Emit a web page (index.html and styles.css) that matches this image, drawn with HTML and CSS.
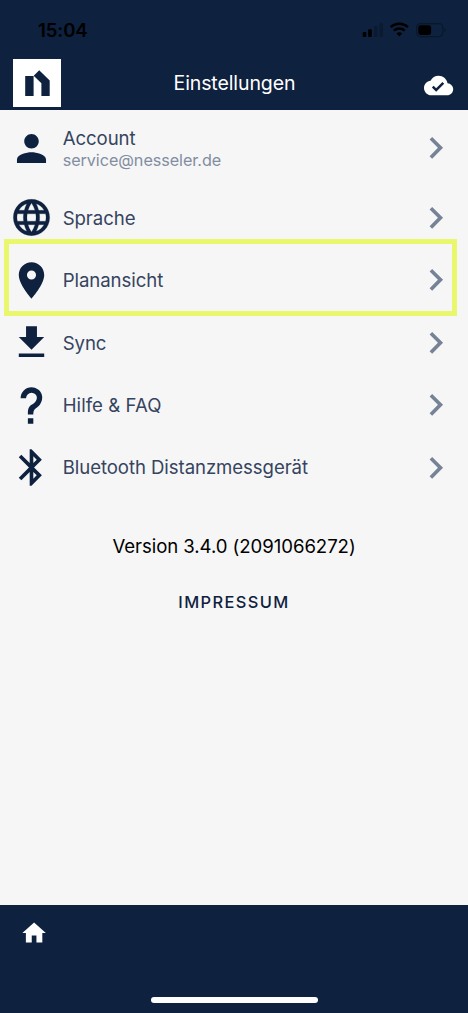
FILE: index.html
```html
<!DOCTYPE html>
<html lang="de">
<head>
<meta charset="utf-8">
<title>Einstellungen</title>
<link rel="stylesheet" href="styles.css">
</head>
<body>
<div class="app">
  <header class="header">
    <div class="status">
      <span class="time">15:04</span>
      <svg class="status-icons" width="86" height="18" viewBox="0 0 86 18">
        <rect x="0.7" y="11" width="3.6" height="5" rx="1"/>
        <rect x="6.2" y="8.3" width="3.6" height="7.7" rx="1"/>
        <rect class="dim" x="12" y="5" width="3.4" height="11" rx="1"/>
        <rect class="dim" x="17.6" y="2.2" width="3.4" height="13.8" rx="1"/>
        <g fill="none" stroke="#000" stroke-width="2.5">
          <path d="M28.7 6.2a12.5 12.5 0 0 1 17.2 0"/>
          <path d="M31.9 9.6a7.9 7.9 0 0 1 10.8 0"/>
        </g>
        <path d="M37.3 15.4l-2.8-2.9a4 4 0 0 1 5.6 0z"/>
        <rect class="shell" x="54.6" y="2.6" width="26.2" height="13" rx="4"/>
        <rect x="56.3" y="4.2" width="12.8" height="9.8" rx="2.4"/>
        <path class="dim" d="M82.3 7c2.2.6 2.2 3.6 0 4.2z"/>
      </svg>
    </div>
    <div class="toolbar">
      <svg class="logo" width="48" height="48" viewBox="0 0 48 48">
        <rect width="48" height="48" fill="#fff"/>
        <path d="M12.2 17h8.4v20h-8.4zM20.7 16.7l5.5-5.5 10.5 10.2V37h-8.3V24.2z"/>
      </svg>
      <h1 class="title">Einstellungen</h1>
      <svg class="cloud" viewBox="0 0 24 24"><path d="M19.35 10.04C18.67 6.59 15.64 4 12 4 9.11 4 6.6 5.64 5.35 8.04 2.34 8.36 0 10.91 0 14c0 3.31 2.69 6 6 6h13c2.76 0 5-2.24 5-5 0-2.64-2.05-4.78-4.65-4.96zM10 17l-3.5-3.5 1.41-1.41L10 14.17 15.18 9l1.41 1.41L10 17z"/></svg>
    </div>
  </header>

  <main class="content">
    <ul class="list">
      <li class="row row-account">
        <svg class="icon" viewBox="-0.385 -0.385 24.77 24.77"><path d="M12 12c2.21 0 4-1.79 4-4s-1.79-4-4-4-4 1.79-4 4 1.79 4 4 4zm0 2c-2.67 0-8 1.34-8 4v2h16v-2c0-2.66-5.33-4-8-4z"/></svg>
        <div class="text"><span class="label">Account</span><span class="sub">service@nesseler.de</span></div>
        <svg class="chevron" viewBox="0 0 24 24"><path d="M10 6L8.59 7.41 13.17 12l-4.58 4.59L10 18l6-6z"/></svg>
      </li>
      <li class="row">
        <svg class="icon" viewBox="-0.385 -0.385 24.77 24.77"><path d="M11.99 2C6.47 2 2 6.48 2 12s4.47 10 9.99 10C17.52 22 22 17.52 22 12S17.52 2 11.99 2zm6.93 6h-2.95c-.32-1.25-.78-2.45-1.38-3.56 1.84.63 3.37 1.91 4.33 3.56zM12 4.04c.83 1.2 1.48 2.53 1.91 3.96h-3.82c.43-1.43 1.08-2.76 1.91-3.96zM4.26 14C4.1 13.36 4 12.69 4 12s.1-1.36.26-2h3.38c-.08.66-.14 1.32-.14 2s.06 1.34.14 2H4.26zm.82 2h2.95c.32 1.25.78 2.45 1.38 3.56-1.84-.63-3.37-1.9-4.33-3.56zm2.95-8H5.08c.96-1.66 2.49-2.93 4.33-3.56C8.81 5.55 8.35 6.75 8.03 8zM12 19.96c-.83-1.2-1.48-2.53-1.91-3.96h3.82c-.43 1.43-1.08 2.76-1.91 3.96zM14.34 14H9.66c-.09-.66-.16-1.32-.16-2s.07-1.35.16-2h4.68c.09.65.16 1.32.16 2s-.07 1.34-.16 2zm.25 5.56c.6-1.11 1.06-2.31 1.38-3.56h2.95c-.96 1.65-2.49 2.93-4.33 3.56zM16.36 14c.08-.66.14-1.32.14-2s-.06-1.34-.14-2h3.38c.16.64.26 1.31.26 2s-.1 1.36-.26 2h-3.38z" stroke="#0e213e" stroke-width="0.12"/></svg>
        <div class="text"><span class="label">Sprache</span></div>
        <svg class="chevron" viewBox="0 0 24 24"><path d="M10 6L8.59 7.41 13.17 12l-4.58 4.59L10 18l6-6z"/></svg>
      </li>
      <li class="row marked">
        <svg class="icon" viewBox="-0.385 -0.385 24.77 24.77"><path d="M12 2C8.13 2 5 5.13 5 9c0 5.25 7 13 7 13s7-7.75 7-13c0-3.87-3.13-7-7-7zm0 9.5a2.5 2.5 0 0 1 0-5 2.5 2.5 0 0 1 0 5z"/></svg>
        <div class="text"><span class="label">Planansicht</span></div>
        <svg class="chevron" viewBox="0 0 24 24"><path d="M10 6L8.59 7.41 13.17 12l-4.58 4.59L10 18l6-6z"/></svg>
      </li>
      <li class="row">
        <svg class="icon" viewBox="-0.385 -0.385 24.77 24.77"><path d="M19 9h-4V3H9v6H5l7 7 7-7zM5 18v2h14v-2H5z"/></svg>
        <div class="text"><span class="label">Sync</span></div>
        <svg class="chevron" viewBox="0 0 24 24"><path d="M10 6L8.59 7.41 13.17 12l-4.58 4.59L10 18l6-6z"/></svg>
      </li>
      <li class="row">
        <svg class="icon" viewBox="-0.385 -0.385 24.77 24.77"><path d="M10 19h3v3h-3v-3M12 2c5.35.22 7.68 5.62 4.5 9.67-.83 1-2.17 1.66-2.83 2.5C13 15 13 16 13 17h-3c0-1.67 0-3.08.67-4.08.66-1 2-1.59 2.83-2.25C15.92 8.43 15.32 5.26 12 5a3 3 0 0 0-3 3H6a6 6 0 0 1 6-6z"/></svg>
        <div class="text"><span class="label label-help">Hilfe &amp; FAQ</span></div>
        <svg class="chevron" viewBox="0 0 24 24"><path d="M10 6L8.59 7.41 13.17 12l-4.58 4.59L10 18l6-6z"/></svg>
      </li>
      <li class="row">
        <svg class="icon" viewBox="-0.385 -0.385 24.77 24.77"><path d="M14.88 16.29L13 18.17v-3.76M13 5.83l1.88 1.88L13 9.58M17.71 7.71L12 2h-1v7.58L6.41 5 5 6.41 10.59 12 5 17.58 6.41 19 11 14.41V22h1l5.71-5.71-4.3-4.29z"/></svg>
        <div class="text"><span class="label">Bluetooth Distanzmessgerät</span></div>
        <svg class="chevron" viewBox="0 0 24 24"><path d="M10 6L8.59 7.41 13.17 12l-4.58 4.59L10 18l6-6z"/></svg>
      </li>
    </ul>
    <p class="version">Version 3.4.0 (2091066272)</p>
    <a class="imprint">IMPRESSUM</a>
  </main>

  <footer class="footer">
    <svg class="home" viewBox="0 0 24 24"><path d="M10 20v-6h4v6h5v-8h3L12 3 2 12h3v8z"/></svg>
    <div class="home-bar"></div>
  </footer>
</div>
</body>
</html>
```
FILE: styles.css
```css
*, *::after { box-sizing: border-box; }
body { margin: 0; font-family: Inter, "Liberation Sans", sans-serif; }
.app { width: 468px; height: 1013px; display: flex; flex-direction: column; background: #f6f6f6; overflow: hidden; }
svg { display: block; flex: none; }

.header { height: 109.5px; flex: none; background: #0e213e; }
.status { height: 59px; padding: 21px 20px 0 38px; display: flex; justify-content: space-between; align-items: flex-start; }
.time { margin-top: -1px; font-size: 18.6px; line-height: 20px; font-weight: 600; color: #000; letter-spacing: -0.1px; }
.dim { fill: #0a1a31; }
.shell { fill: none; stroke: #09172b; stroke-width: 1.2; }
.toolbar { display: flex; align-items: flex-start; padding: 0 14.5px 0 13px; }
.logo { fill: #0e213e; }
.title { flex: 1; margin: 12px 0 0; padding-right: 16.4px; text-align: center; font-size: 19.5px; line-height: 25px; letter-spacing: -0.1px; font-weight: 400; color: #fff; white-space: nowrap; }
.cloud { width: 29.2px; height: 29.2px; margin-top: 11.8px; fill: #fff; }

.content { flex: 1; display: flex; flex-direction: column; align-items: center; }
.list { list-style: none; margin: 0; padding: 0; width: 100%; }
.row { height: 62.4px; display: flex; align-items: center; padding: 0 10px 0 9px; position: relative; }
.row-account { height: 77.2px; }
.icon { width: 45px; height: 45px; fill: #0e213e; }
.chevron { width: 43.6px; height: 43.6px; fill: #768397; }
.text { flex: 1; margin-left: 8.7px; display: flex; flex-direction: column; white-space: nowrap; }
.label { font-size: 18.6px; line-height: 24px; letter-spacing: -0.07px; color: #35445f; }
.label-help { letter-spacing: 0.06px; }
.sub { font-size: 16.2px; line-height: 20px; letter-spacing: -0.06px; color: #828da1; }
.marked::after { content: ""; position: absolute; left: 4px; top: -10px; width: 453px; height: 77px; border: 5px solid #e9f76c; }
.version { margin: 35px 0 0; font-size: 18.6px; line-height: 24px; letter-spacing: -0.06px; color: #000; white-space: nowrap; }
.imprint { margin-top: 34px; font-size: 16.4px; line-height: 20px; font-weight: 500; letter-spacing: 1.4px; color: #0e213e; }

.footer { height: 108.5px; flex: none; background: #0e213e; display: flex; flex-direction: column; align-items: center; justify-content: space-between; padding: 14.5px 19.5px 10px; }
.home { width: 28.2px; height: 28.2px; fill: #fff; align-self: flex-start; }
.home-bar { width: 167px; height: 6px; border-radius: 3px; background: #fff; }
```
